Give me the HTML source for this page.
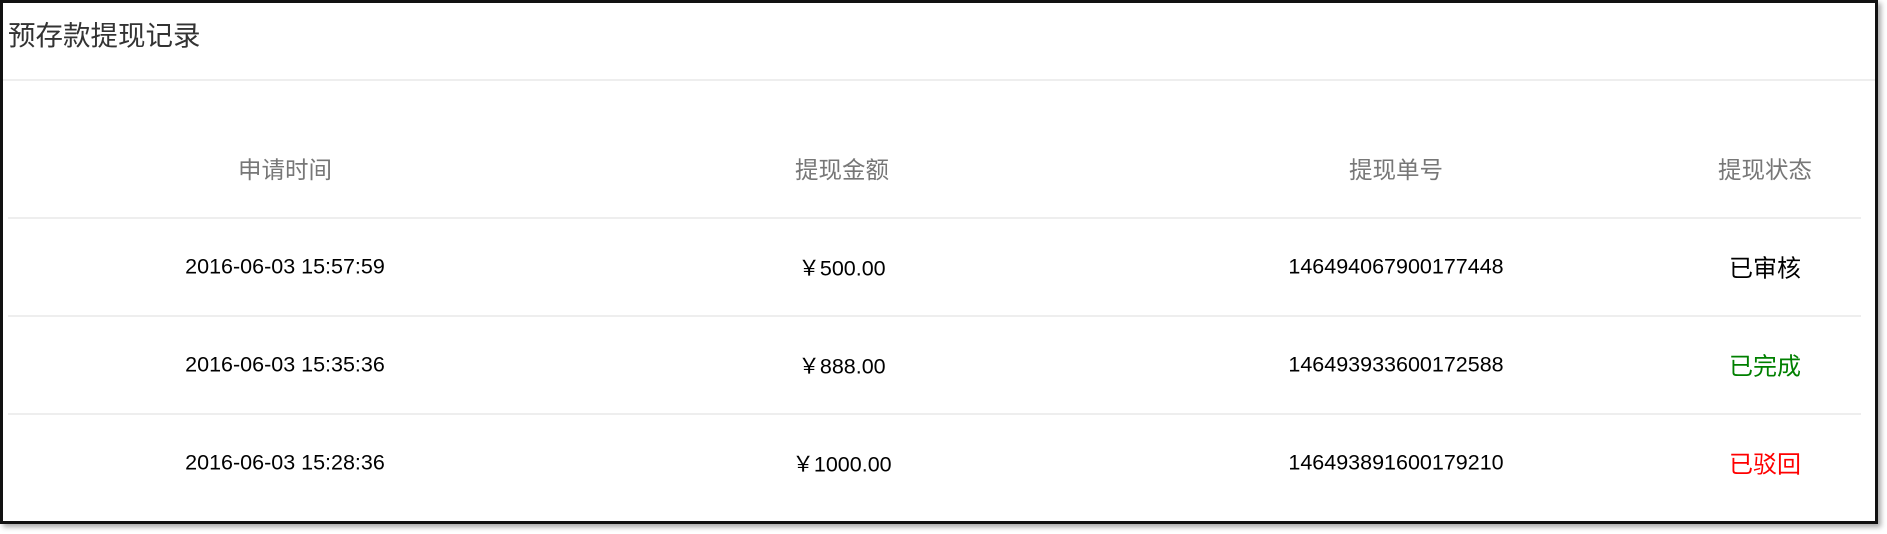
<!DOCTYPE html>
<html><head><meta charset="utf-8"><style>
*{margin:0;padding:0;box-sizing:border-box}
body{width:1887px;height:534px;background:#fff;font-family:"Liberation Sans","Noto Sans CJK SC",sans-serif;position:relative;overflow:hidden}
.box{position:absolute;left:0;top:0;width:1878px;height:524px;border:3px solid #111;box-shadow:3px 3px 5px rgba(0,0,0,.35);background:#fff}
.title{position:absolute;left:5px;top:16px;font-size:27.5px;color:#333;line-height:34px}
.hl{position:absolute;left:0;right:0;top:76px;height:2px;background:#eee}
.l{position:absolute;left:5px;width:1853px;height:2px;background:#eee}
.t{position:absolute;transform:translate(-50%,-50%);white-space:nowrap;font-size:21.5px;color:#000}
.h{color:#777;font-size:23.5px}
.s{font-size:24px}
</style></head><body>
<div class="box">
<div class="title">预存款提现记录</div>
<div class="hl"></div>
<div class="t h" style="left:282px;top:165px">申请时间</div>
<div class="t h" style="left:839px;top:165px">提现金额</div>
<div class="t h" style="left:1393px;top:165px">提现单号</div>
<div class="t h" style="left:1762px;top:165px">提现状态</div>
<div class="l" style="top:214px"></div>
<div class="t" style="left:282px;top:264px">2016-06-03 15:57:59</div>
<div class="t" style="left:839px;top:264px">￥500.00</div>
<div class="t" style="left:1393px;top:264px">146494067900177448</div>
<div class="t s" style="left:1762px;top:263px">已审核</div>
<div class="l" style="top:312px"></div>
<div class="t" style="left:282px;top:362px">2016-06-03 15:35:36</div>
<div class="t" style="left:839px;top:362px">￥888.00</div>
<div class="t" style="left:1393px;top:362px">146493933600172588</div>
<div class="t s" style="left:1762px;top:361px;color:#008000">已完成</div>
<div class="l" style="top:410px"></div>
<div class="t" style="left:282px;top:460px">2016-06-03 15:28:36</div>
<div class="t" style="left:839px;top:460px">￥1000.00</div>
<div class="t" style="left:1393px;top:460px">146493891600179210</div>
<div class="t s" style="left:1762px;top:459px;color:#f00">已驳回</div>
</div>
</body></html>
